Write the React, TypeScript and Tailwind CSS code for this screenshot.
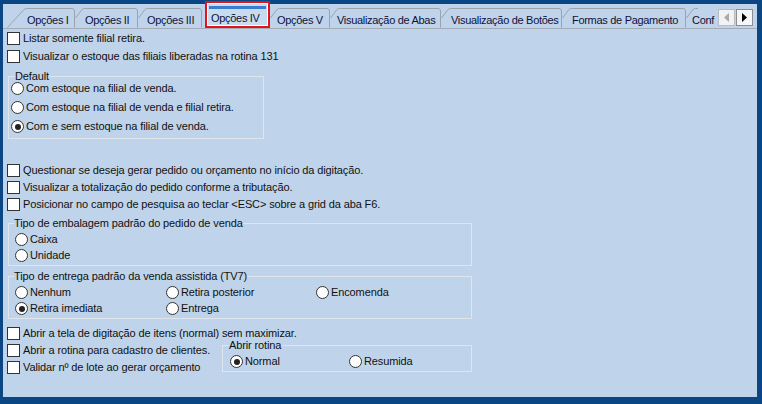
import React from "react";

const font =
  "font-['Liberation_Sans','Arial',sans-serif] text-[11px] leading-[13px] tracking-[-0.12px] text-[#111]";

function CheckBox({ label }: { label: string }) {
  return (
    <div className="flex h-[17px] items-center gap-[3px]">
      <span className="h-[13px] w-[13px] shrink-0 border border-[#333] bg-white" />
      <span className="whitespace-nowrap">{label}</span>
    </div>
  );
}

function Radio({ label, checked = false }: { label: string; checked?: boolean }) {
  return (
    <div className="flex h-[13px] items-center gap-[2px]">
      <span className="flex h-[13px] w-[13px] shrink-0 items-center justify-center rounded-full border border-[#333] bg-white">
        {checked && <span className="h-[6px] w-[6px] rounded-full bg-[#222]" />}
      </span>
      <span className="whitespace-nowrap">{label}</span>
    </div>
  );
}

function Group({
  title,
  className,
  legendClass,
  children,
}: {
  title: string;
  className?: string;
  legendClass?: string;
  children: React.ReactNode;
}) {
  return (
    <fieldset className={`border border-[#dfe5ec] ${className ?? ""}`}>
      <legend className={legendClass ?? "h-[12px] leading-[12px]"}>{title}</legend>
      {children}
    </fieldset>
  );
}

type Tab = { label: string; width: number; pl: string; first?: boolean; active?: boolean };

const tabs: Tab[] = [
  { label: "Opções I", width: 68, pl: "pl-[20px]", first: true },
  { label: "Opções II", width: 63, pl: "pl-[10px]" },
  { label: "Opções III", width: 64, pl: "pl-[9px]" },
  { label: "Opções IV", width: 68, pl: "pl-[4px]", active: true },
  { label: "Opções V", width: 60, pl: "pl-[7px]" },
  { label: "Visualização de Abas", width: 111, pl: "pl-[7px]" },
  { label: "Visualização de Botões", width: 121, pl: "pl-[10px]" },
  { label: "Formas de Pagamento", width: 124, pl: "pl-[10px]" },
];

function TabOutline({ w, first }: { w: number; first?: boolean }) {
  const d = first
    ? `M0.5,19.5 L17,1.5 Q18,0.5 19.5,0.5 L${w - 3},0.5 Q${w - 0.5},0.5 ${w - 0.5},3 L${w - 0.5},19.5`
    : `M0.5,10 L7,1.5 Q8,0.5 9.5,0.5 L${w - 3},0.5 Q${w - 0.5},0.5 ${w - 0.5},3 L${w - 0.5},19.5`;
  return (
    <svg className="absolute left-0 top-0" width={w} height={20}>
      <path d={d} fill="none" stroke="#9ba4ae" strokeWidth="1" />
    </svg>
  );
}

function TabStrip() {
  return (
    <div className="relative flex h-[25px] items-end border-b border-[#a3acb6] pl-[4px] tracking-[-0.3px]">
      {tabs.map((t) =>
        t.active ? (
          <div key={t.label} className="flex h-[25px] w-[68px] shrink-0 items-end pl-[3px]">
            <div className="flex h-[27px] w-[65px] flex-col border-2 border-[#e3151a] bg-[#c8dcef]">
              <div className="flex h-full flex-col border border-white">
                <div className="mx-[1px] mt-[2px] h-[3px] bg-[#3b7bd0]" />
                <div className="pl-[3px] pt-[3px] text-[#10103a]">{t.label}</div>
              </div>
            </div>
          </div>
        ) : (
          <div
            key={t.label}
            className={`relative h-[20px] shrink-0 ${t.pl} pt-[6px] text-[#10103a]`}
            style={{ width: t.width }}
          >
            <TabOutline w={t.width} first={t.first} />
            <span className="relative whitespace-nowrap">{t.label}</span>
          </div>
        )
      )}
      <div className="relative h-[20px] flex-1 overflow-hidden pl-[6px] pt-[6px] text-[#10103a]">
        <svg className="absolute left-0 top-0" width={12} height={20}>
          <path d="M0.5,10 L7,1.5 Q8,0.5 9.5,0.5 L12,0.5" fill="none" stroke="#9ba4ae" />
        </svg>
        <span className="relative whitespace-nowrap">Conf</span>
      </div>
      <div className="absolute right-[4px] top-[5px] flex gap-[1px] bg-[#bfd4ea]">
        <div className="flex h-[17px] w-[17px] items-center justify-center border border-[#b7bcc2] bg-[#f2f2f2]">
          <svg width="6" height="9">
            <path d="M5,0 L0,4.5 L5,9 Z" fill="#a9a9a9" />
          </svg>
        </div>
        <div className="flex h-[17px] w-[17px] items-center justify-center border border-[#8a8f96] bg-[#f6f6f6]">
          <svg width="6" height="9">
            <path d="M0,0 L5,4.5 L0,9 Z" fill="#000" />
          </svg>
        </div>
      </div>
    </div>
  );
}

export default function App() {
  return (
    <div className={`h-[404px] w-[762px] bg-[#0b4684] pb-[7px] pl-[3px] pr-[5px] pt-[4px] ${font}`}>
      <div className="flex h-full flex-col bg-[#bfd4ea]">
        <TabStrip />
        <div className="flex flex-col pl-[4px] pt-[1px]">
          <div className="flex flex-col gap-[1px]">
            <CheckBox label="Listar somente filial retira." />
            <CheckBox label="Visualizar o estoque das filiais liberadas na rotina 131" />
          </div>

          <Group
            title="Default"
            className="ml-[1px] mt-[5px] w-[256px] pb-[5px]"
            legendClass="ml-[6px] h-[12px] leading-[12px]"
          >
            <div className="flex flex-col gap-[6px] pl-[2px]">
              <Radio label="Com estoque na filial de venda." />
              <Radio label="Com estoque na filial de venda e filial retira." />
              <Radio label="Com e sem estoque na filial de venda." checked />
            </div>
          </Group>

          <div className="mt-[23px] flex flex-col">
            <CheckBox label="Questionar se deseja gerar pedido ou orçamento no início da digitação." />
            <CheckBox label="Visualizar a totalização do pedido conforme a tributação." />
            <CheckBox label="Posicionar no campo de pesquisa ao teclar <ESC> sobre a grid da aba F6." />
          </div>

          <Group
            title="Tipo de embalagem padrão do pedido de venda"
            className="ml-[1px] mt-[4px] w-[464px] pb-[3px]"
            legendClass="ml-[5px] h-[12px] leading-[12px]"
          >
            <div className="mt-[4px] flex flex-col gap-[3px] pl-[6px]">
              <Radio label="Caixa" />
              <Radio label="Unidade" />
            </div>
          </Group>

          <Group
            title="Tipo de entrega padrão da venda assistida (TV7)"
            className="ml-[1px] mt-[4px] w-[464px] pb-[3px]"
            legendClass="ml-[5px] h-[12px] leading-[12px]"
          >
            <div className="mt-[4px] grid grid-cols-[151px_150px_auto] gap-y-[3px] pl-[6px]">
              <Radio label="Nenhum" />
              <Radio label="Retira posterior" />
              <Radio label="Encomenda" />
              <Radio label="Retira imediata" checked />
              <Radio label="Entrega" />
            </div>
          </Group>

          <div className="mt-[6px]">
            <CheckBox label="Abrir a tela de digitação de itens (normal) sem maximizar." />
          </div>
          <div className="flex">
            <div className="flex w-[215px] flex-col">
              <CheckBox label="Abrir a rotina para cadastro de clientes." />
              <CheckBox label="Validar nº de lote ao gerar orçamento" />
            </div>
            <Group
              title="Abrir rotina"
              className="-mt-[2px] h-[32px] w-[250px]"
              legendClass="ml-[6px] h-[10px] leading-[10px]"
            >
              <div className="mt-[5px] grid grid-cols-[119px_auto] pl-[7px]">
                <Radio label="Normal" checked />
                <Radio label="Resumida" />
              </div>
            </Group>
          </div>
        </div>
      </div>
    </div>
  );
}
